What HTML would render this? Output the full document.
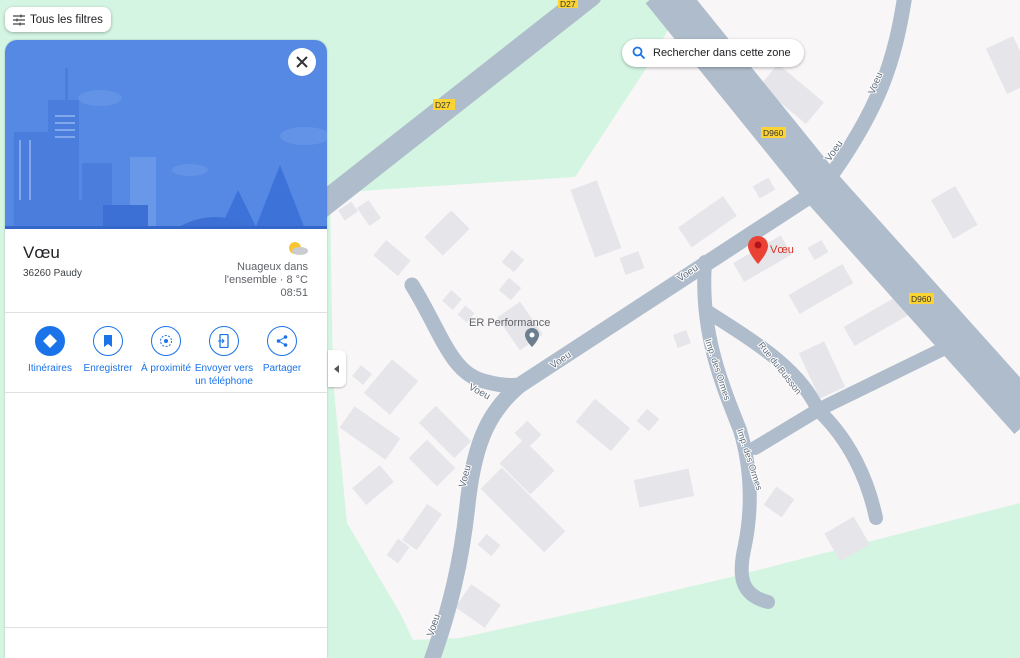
<!DOCTYPE html>
<html><head><meta charset="utf-8"><style>
*{margin:0;padding:0;box-sizing:border-box}
body{width:1020px;height:658px;overflow:hidden;position:relative;font-family:"Liberation Sans",Arial,sans-serif;background:#d4f5e2}
#map{position:absolute;left:0;top:0}
.btn{position:absolute;background:#fff;border-radius:8px;box-shadow:0 1px 3px rgba(0,0,0,.3);font-size:12px;color:#202124;white-space:nowrap}
#panel{position:absolute;left:5px;top:40px;width:322px;height:618px;background:#fff;border-radius:12px 12px 0 0;overflow:hidden;box-shadow:0 0 2px rgba(0,0,0,.2)}
.act{position:absolute;top:286px;width:60px;text-align:center;font-size:10px;color:#1a73e8;line-height:13px}
.act .c{width:30px;height:30px;border-radius:50%;border:1px solid #1a73e8;margin:0 auto 6px;display:flex;align-items:center;justify-content:center}
.rl text{paint-order:stroke;stroke:#fff;stroke-width:2px}
</style></head><body>
<svg id="map" width="1020" height="658" viewBox="0 0 1020 658">
<rect width="1020" height="658" fill="#d4f5e2"/>
<polygon points="330,193 575,177 647,67 685,0 1020,0 1020,503 727,578 633,600 460,638 413,640 400,613 347,523 333,380" fill="#f8f6f7"/>
<g fill="#e6e6ea">
<rect x="340" y="205" width="16" height="12" transform="rotate(-35 348 211)"/>
<rect x="362" y="202" width="14" height="22" transform="rotate(-35 369 213)"/>
<rect x="428" y="220" width="38" height="26" transform="rotate(-45 447 233)"/>
<rect x="376" y="248" width="32" height="20" transform="rotate(40 392 258)"/>
<rect x="505" y="253" width="16" height="16" transform="rotate(40 513 261)"/>
<rect x="502" y="281" width="16" height="16" transform="rotate(40 510 289)"/>
<rect x="445" y="293" width="14" height="14" transform="rotate(40 452 300)"/>
<rect x="460" y="308" width="12" height="12" transform="rotate(40 466 314)"/>
<rect x="500" y="312" width="40" height="28" transform="rotate(55 520 326)"/>
<rect x="582" y="183" width="28" height="72" transform="rotate(-20 596 219)"/>
<rect x="622" y="254" width="20" height="18" transform="rotate(-20 632 263)"/>
<rect x="680" y="210" width="55" height="24" transform="rotate(-35 707 222)"/>
<rect x="755" y="181" width="18" height="14" transform="rotate(-30 764 188)"/>
<rect x="762" y="80" width="60" height="28" transform="rotate(40 792 94)"/>
<rect x="735" y="248" width="55" height="22" transform="rotate(-30 762 259)"/>
<rect x="810" y="243" width="16" height="14" transform="rotate(-30 818 250)"/>
<rect x="790" y="278" width="62" height="22" transform="rotate(-30 821 289)"/>
<rect x="845" y="310" width="62" height="22" transform="rotate(-30 876 321)"/>
<rect x="808" y="345" width="28" height="50" transform="rotate(-25 822 370)"/>
<rect x="940" y="190" width="28" height="45" transform="rotate(-30 954 212)"/>
<rect x="995" y="40" width="30" height="50" transform="rotate(-25 1010 65)"/>
<rect x="355" y="368" width="14" height="14" transform="rotate(40 362 375)"/>
<rect x="374" y="365" width="34" height="44" transform="rotate(40 391 387)"/>
<rect x="342" y="420" width="56" height="26" transform="rotate(35 370 433)"/>
<rect x="420" y="420" width="50" height="24" transform="rotate(45 445 432)"/>
<rect x="412" y="450" width="40" height="26" transform="rotate(45 432 463)"/>
<rect x="355" y="474" width="36" height="22" transform="rotate(-40 373 485)"/>
<rect x="400" y="518" width="44" height="18" transform="rotate(-55 422 527)"/>
<rect x="388" y="544" width="20" height="14" transform="rotate(-55 398 551)"/>
<rect x="480" y="538" width="18" height="14" transform="rotate(40 489 545)"/>
<rect x="505" y="450" width="44" height="34" transform="rotate(45 527 467)"/>
<rect x="478" y="495" width="90" height="30" transform="rotate(45 523 510)"/>
<rect x="518" y="425" width="20" height="18" transform="rotate(45 528 434)"/>
<rect x="580" y="410" width="46" height="30" transform="rotate(40 603 425)"/>
<rect x="640" y="412" width="16" height="16" transform="rotate(40 648 420)"/>
<rect x="636" y="474" width="56" height="28" transform="rotate(-12 664 488)"/>
<rect x="675" y="332" width="14" height="14" transform="rotate(-20 682 339)"/>
<rect x="460" y="592" width="36" height="28" transform="rotate(35 478 606)"/>
<rect x="768" y="491" width="22" height="22" transform="rotate(35 779 502)"/>
<rect x="830" y="523" width="34" height="32" transform="rotate(-30 847 539)"/>
</g>
<g fill="none" stroke="#aebccb" stroke-linecap="round" stroke-linejoin="round">
<path d="M310,215 L590,-5" stroke-width="24"/>
<path d="M662,-10 L822,188 L1030,420" stroke-width="42" stroke-linecap="butt"/>
<path d="M905,-5 C895,60 880,110 822,188" stroke-width="15"/>
<path d="M822,188 L520,385 C490,410 475,440 468,500 C462,560 450,610 430,665" stroke-width="16"/>
<path d="M412,285 C440,330 450,370 480,380 C500,386 510,386 520,385" stroke-width="15"/>
<path d="M705,262 C700,330 720,380 740,430 C752,470 752,510 745,545 C738,575 740,595 768,602" stroke-width="14"/>
<path d="M708,312 C760,345 800,370 818,410 L755,448 M818,410 L945,348 M818,410 C850,440 868,480 876,518" stroke-width="14"/>
</g>
<g class="rl" font-family="Liberation Sans" font-size="10" fill="#5f6b7a">
<text x="0" y="0" transform="translate(468,389) rotate(28)">Voeu</text>
<text x="0" y="0" transform="translate(553,369) rotate(-34)">Voeu</text>
<text x="0" y="0" transform="translate(680,282) rotate(-34)">Voeu</text>
<text x="0" y="0" transform="translate(830,162) rotate(-55)">Voeu</text>
<text x="0" y="0" transform="translate(874,95) rotate(-68)">Voeu</text>
<text x="0" y="0" transform="translate(465,488) rotate(-75)">Voeu</text>
<text x="0" y="0" transform="translate(433,637) rotate(-72)">Voeu</text>
<text x="0" y="0" transform="translate(705,340) rotate(72)" font-size="9">Imp. des Ormes</text>
<text x="0" y="0" transform="translate(737,430) rotate(72)" font-size="9">Imp. des Ormes</text>
<text x="0" y="0" transform="translate(758,345) rotate(52)" font-size="9">Rue du Buisson</text>
</g>
<text x="469" y="326" font-family="Liberation Sans" font-size="11" fill="#5f6368">ER Performance</text>
<g font-family="Liberation Sans" font-size="8.5" fill="#333">
<rect x="558" y="0" width="20" height="8" fill="#fbd434"/><text x="560" y="7">D27</text>
<rect x="433" y="99" width="22" height="11" fill="#fbd434"/><text x="435" y="108">D27</text>
<rect x="761" y="127" width="25" height="11" fill="#fbd434"/><text x="763" y="136">D960</text>
<rect x="909" y="293" width="25" height="11" fill="#fbd434"/><text x="911" y="302">D960</text>
</g>
<path d="M532,328 a7,7 0 0 1 7,7 c0,5 -7,12 -7,12 c0,0 -7,-7 -7,-12 a7,7 0 0 1 7,-7z" fill="#6d7f8e"/><circle cx="532" cy="335" r="2.5" fill="#fff"/>
<path d="M758,236 a10,10 0 0 1 10,10 c0,7 -10,18 -10,18 c0,0 -10,-11 -10,-18 a10,10 0 0 1 10,-10z" fill="#ea4335"/><circle cx="758" cy="245" r="3.5" fill="#b3141b"/>
<text x="770" y="253" font-family="Liberation Sans" font-size="11" fill="#d93025">Vœu</text>
</svg>

<div class="btn" style="left:5px;top:7px;width:106px;height:25px;display:flex;align-items:center;padding-left:8px;font-size:11.5px">
<svg width="12" height="12" viewBox="0 0 12 12" style="margin-right:5px"><g stroke="#444" stroke-width="1.2"><path d="M0 2h12M0 6h12M0 10h12"/><path d="M8 0.5v3M4 4.5v3M7 8.5v3"/></g></svg>Tous les filtres</div>

<div class="btn" style="left:622px;top:39px;width:182px;height:28px;border-radius:14px;display:flex;align-items:center;padding-left:10px;font-size:11px">
<svg width="14" height="14" viewBox="0 0 14 14" style="margin-right:7px"><circle cx="5.5" cy="5.5" r="4" fill="none" stroke="#1a73e8" stroke-width="1.8"/><path d="M8.5 8.5l4 4" stroke="#1a73e8" stroke-width="1.8"/></svg>Rechercher dans cette zone</div>

<div id="panel">
<svg width="322" height="189" viewBox="0 0 322 189" style="display:block">
<rect width="322" height="189" fill="#5689e3"/>
<g fill="#6b9aea" opacity=".6"><ellipse cx="95" cy="58" rx="22" ry="8"/><ellipse cx="300" cy="96" rx="25" ry="9"/><ellipse cx="185" cy="130" rx="18" ry="6"/></g>
<g fill="#4a7ddc">
<rect x="9" y="92" width="34" height="95"/>
<rect x="60" y="28" width="3" height="35"/>
<rect x="43" y="60" width="31" height="127"/>
<rect x="77" y="123" width="30" height="64"/>
<rect x="125" y="117" width="26" height="70" fill="#6a98e8"/>
<rect x="22" y="160" width="70" height="27"/>
<rect x="98" y="165" width="45" height="22" fill="#3c70d4"/>
<path d="M250 189 L275 125 L300 189Z M215 189 L233 150 L252 189Z" fill="#3d72d8"/>
<path d="M170 189 Q210 165 250 189Z" fill="#3c70d4"/>
<rect x="0" y="186" width="322" height="3" fill="#3566c9"/>
</g>
<g fill="#8fb2f0" opacity=".8"><rect x="50" y="75" width="20" height="2"/><rect x="50" y="82" width="20" height="2"/><rect x="50" y="89" width="20" height="2"/><rect x="50" y="96" width="20" height="2"/><rect x="14" y="100" width="2" height="60"/><rect x="24" y="100" width="2" height="60"/></g>
</svg>
<div style="position:absolute;left:283px;top:8px;width:28px;height:28px;border-radius:50%;background:#fff;display:flex;align-items:center;justify-content:center"><svg width="12" height="12"><path d="M1 1L11 11M11 1L1 11" stroke="#333" stroke-width="2"/></svg></div>
<div style="position:absolute;left:18px;top:203px;font-size:17px;color:#202124">Vœu</div>
<div style="position:absolute;left:18px;top:228px;font-size:10px;color:#3c4043">36260 Paudy</div>
<svg style="position:absolute;left:280px;top:200px" width="24" height="16"><circle cx="10" cy="8" r="6" fill="#f9c630"/><ellipse cx="15" cy="11" rx="8" ry="4" fill="#c9ccd1"/></svg>
<div style="position:absolute;right:19px;top:221px;font-size:11px;color:#5f6368;text-align:right;line-height:13px">Nuageux dans<br>l'ensemble · 8 °C<br>08:51</div>
<div style="position:absolute;left:0;top:272px;width:322px;height:1px;background:#e0e0e0"></div>
<div class="act" style="left:15px"><div class="c" style="background:#1a73e8"><svg width="14" height="14"><path d="M7 0L14 7L7 14L0 7Z" fill="#fff"/></svg></div>Itinéraires</div>
<div class="act" style="left:73px"><div class="c"><svg width="10" height="12"><path d="M1 0h8v12L5 9L1 12Z" fill="#1a73e8"/></svg></div>Enregistrer</div>
<div class="act" style="left:131px"><div class="c"><svg width="14" height="14"><circle cx="7" cy="7" r="5.5" fill="none" stroke="#1a73e8" stroke-dasharray="2 1.5"/><circle cx="7" cy="7" r="2" fill="#1a73e8"/></svg></div>À proximité</div>
<div class="act" style="left:189px"><div class="c"><svg width="12" height="14"><rect x="2" y="0.5" width="8" height="13" rx="1" fill="none" stroke="#1a73e8" stroke-width="1.3"/><path d="M0 7h6M4 5l2 2-2 2" stroke="#1a73e8" fill="none"/></svg></div>Envoyer vers<br>un téléphone</div>
<div class="act" style="left:247px"><div class="c"><svg width="12" height="12"><circle cx="9.5" cy="2" r="1.8" fill="#1a73e8"/><circle cx="2.5" cy="6" r="1.8" fill="#1a73e8"/><circle cx="9.5" cy="10" r="1.8" fill="#1a73e8"/><path d="M9.5 2L2.5 6L9.5 10" stroke="#1a73e8" fill="none"/></svg></div>Partager</div>
<div style="position:absolute;left:0;top:352px;width:322px;height:1px;background:#e0e0e0"></div>
<div style="position:absolute;left:0;top:587px;width:322px;height:1px;background:#e0e0e0"></div>
</div>
<div style="position:absolute;left:328px;top:350px;width:18px;height:37px;background:#fff;border-radius:0 6px 6px 0;box-shadow:0 1px 2px rgba(0,0,0,.25);display:flex;align-items:center;justify-content:center"><svg width="6" height="8"><path d="M5 0L0 4L5 8Z" fill="#555"/></svg></div>
</body></html>
